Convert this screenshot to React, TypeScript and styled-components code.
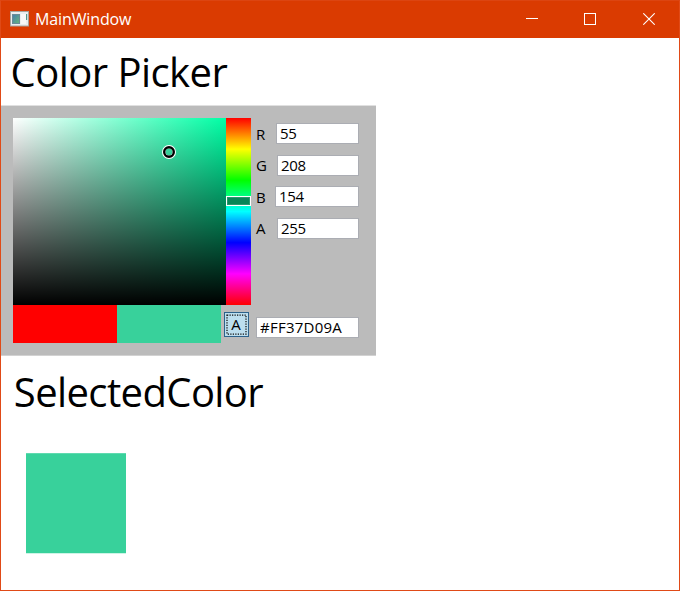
import React from "react";
import styled, { createGlobalStyle } from "styled-components";

const GlobalStyle = createGlobalStyle`
  * { box-sizing: border-box; }
  body { margin: 0; background: #fff; overflow: hidden; }
`;

const WindowFrame = styled.div`
  width: 680px;
  height: 591px;
  border: 1px solid #e04a17;
  border-top-color: #dc4511;
  background: #fff;
  color: #000;
  font-family: "Open Sans", "Noto Sans", sans-serif;
  display: flex;
  flex-direction: column;
  align-items: stretch;
`;

const TitleBar = styled.header`
  height: 37px;
  flex: none;
  background: #da3b01;
  color: #fff;
  display: flex;
  align-items: center;
  padding: 0 1px 2px 9px;
`;

const AppIcon = styled.svg`
  display: block;
  width: 19px;
  height: 16px;
  margin-right: 6px;
`;

const Title = styled.span`
  flex: 1;
  font-size: 16px;
  line-height: 20px;
  letter-spacing: -0.12px;
`;

const CaptionButton = styled.button`
  width: 58.5px;
  height: 35px;
  padding: 0;
  border: 0;
  background: transparent;
  display: flex;
  align-items: center;
  justify-content: center;
  svg { display: block; }
`;

const Heading = styled.h1<{ $height: number; $left: number; $top: number; $spacing: number }>`
  margin: 0;
  height: ${(p) => p.$height}px;
  padding: ${(p) => p.$top}px 0 0 ${(p) => p.$left}px;
  font-size: 40px;
  line-height: 54px;
  font-weight: 400;
  letter-spacing: ${(p) => p.$spacing}px;
  white-space: nowrap;
`;

const Picker = styled.section`
  width: 375px;
  height: 251px;
  flex: none;
  background: #bbb;
  border-top: 1px solid #e0e0e0;
  border-bottom: 1px solid #d2d2d2;
  padding: 12px 0 0 12px;
  display: flex;
`;

const Canvas = styled.div`
  width: 238px;
  display: flex;
  flex-direction: column;
`;

const GradientRow = styled.div`
  height: 187px;
  display: flex;
`;

const ColorArea = styled.div`
  position: relative;
  width: 213px;
  background: linear-gradient(to top, #000, transparent),
    linear-gradient(to right, #fff, #00ffa5);
`;

const AreaHandle = styled.svg`
  position: absolute;
  left: 148px;
  top: 26px;
`;

const HueBar = styled.div`
  position: relative;
  width: 25px;
  background: linear-gradient(to bottom, #f00, #ff0, #0f0, #0ff, #00f, #f0f, #f00);
`;

const HueHandle = styled.div`
  position: absolute;
  left: 0;
  top: 78px;
  width: 25px;
  height: 10px;
  border: 1px solid #fff;
  background: #078657;
  box-shadow: inset 0 0 0 1px #29976f;
`;

const SwatchRow = styled.div`
  height: 38px;
  display: flex;
`;

const Swatch = styled.div<{ $color: string }>`
  width: 104px;
  background: ${(p) => p.$color};
`;

const AlphaToggle = styled.button`
  position: relative;
  width: 25px;
  height: 25px;
  margin: 7px 0 0 3px;
  padding: 0 1px 0 0;
  flex: none;
  border: 1px solid #2c628b;
  background: #bcdeee;
  font: 15px/17px "Open Sans", "Noto Sans", sans-serif;
  color: #000;
  display: flex;
  align-items: center;
  justify-content: center;
`;

const FocusRing = styled.svg`
  position: absolute;
  left: 1px;
  top: 1px;
`;

const Fields = styled.div`
  margin-left: 5px;
  width: 103px;
  display: flex;
  flex-direction: column;
  padding-top: 5px;
`;

const Channel = styled.label`
  height: 21px;
  margin-bottom: 10.5px;
  display: flex;
  justify-content: space-between;
  align-items: center;
  font-size: 15px;
  line-height: 20px;
`;

const TextBox = styled.input<{ $width: number; $spacing?: number }>`
  width: ${(p) => p.$width}px;
  height: 21px;
  margin: 0;
  padding: 0 0 0.6px 3px;
  border: 1px solid #abadb3;
  border-radius: 0;
  outline: 0;
  background: #fff;
  color: #000;
  font: 15px/18px "Open Sans", "Noto Sans", sans-serif;
  letter-spacing: ${(p) => p.$spacing ?? -0.3}px;
`;

const HexField = styled.div`
  margin-top: 68px;
  display: flex;
`;

const SelectedColor = styled.div`
  width: 100px;
  height: 101px;
  margin-left: 25px;
  flex: none;
  background: #38d19b;
  border-top: 1px solid #5fdaaf;
  border-bottom: 1px solid #cdf4e6;
`;

const channels = [
  { name: "R", value: 55, width: 83 },
  { name: "G", value: 208, width: 82 },
  { name: "B", value: 154, width: 84 },
  { name: "A", value: 255, width: 82 },
];

export default function App() {
  return (
    <>
      <GlobalStyle />
      <WindowFrame>
        <TitleBar>
          <AppIcon viewBox="0 0 19 16">
            <rect x=".5" y=".5" width="18" height="14.5" fill="#e9edef" stroke="#a7a49f" />
            <defs>
              <linearGradient id="pane" x1="0" y1="0" x2="1" y2="1">
                <stop offset="0" stopColor="#477caf" />
                <stop offset="1" stopColor="#65b77a" />
              </linearGradient>
            </defs>
            <rect x="2.5" y="3.5" width="7" height="9" fill="url(#pane)" stroke="#6b8b96" />
            <rect x="11" y="3" width="5" height="10" fill="#f8f8f8" />
            <rect x="16" y="3" width="1.2" height="6" fill="#539587" />
          </AppIcon>
          <Title>MainWindow</Title>
          <CaptionButton aria-label="Minimize">
            <svg width="12" height="12"><path d="M0 5.5h12" stroke="#fff" /></svg>
          </CaptionButton>
          <CaptionButton aria-label="Maximize">
            <svg width="12" height="12"><rect x=".5" y=".5" width="11" height="11" fill="none" stroke="#fff" /></svg>
          </CaptionButton>
          <CaptionButton aria-label="Close">
            <svg width="12" height="12"><path d="M.3.3l11.4 11.4M11.7.3L.3 11.7" stroke="#fff" strokeWidth="1.1" /></svg>
          </CaptionButton>
        </TitleBar>
        <Heading $height={67} $left={9.6} $top={7} $spacing={-0.55}>Color Picker</Heading>
        <Picker>
          <Canvas>
            <GradientRow>
              <ColorArea>
                <AreaHandle width="16" height="16">
                  <circle cx="8" cy="8" r="5.2" fill="none" stroke="#fff" strokeWidth="3.6" />
                  <circle cx="8" cy="8" r="4.8" fill="none" stroke="#000" strokeWidth="2.4" />
                </AreaHandle>
              </ColorArea>
              <HueBar><HueHandle /></HueBar>
            </GradientRow>
            <SwatchRow>
              <Swatch $color="#f00" />
              <Swatch $color="#38d19b" />
              <AlphaToggle>
                A
                <FocusRing width="21" height="21">
                  <rect x="1" y="1" width="19" height="19" fill="none" stroke="#111" strokeWidth="1.25" strokeDasharray="1.25 1.25" />
                </FocusRing>
              </AlphaToggle>
            </SwatchRow>
          </Canvas>
          <Fields>
            {channels.map((c) => (
              <Channel key={c.name}>
                {c.name}
                <TextBox $width={c.width} defaultValue={c.value} />
              </Channel>
            ))}
            <HexField><TextBox $width={103} $spacing={0.25} defaultValue="#FF37D09A" /></HexField>
          </Fields>
        </Picker>
        <Heading $height={97} $left={12.8} $top={9} $spacing={-0.6}>SelectedColor</Heading>
        <SelectedColor />
      </WindowFrame>
    </>
  );
}
